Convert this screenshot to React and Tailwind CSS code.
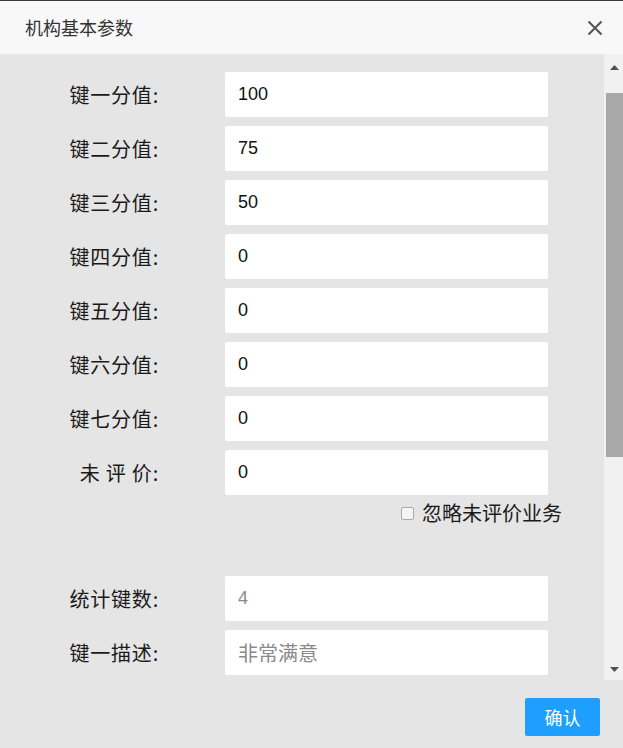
import React from "react";

const cjk = { fontFamily: '"Microsoft YaHei", "Noto Sans CJK SC", sans-serif' };
const latin = { fontFamily: '"Liberation Sans", "Noto Sans CJK SC", sans-serif' };

const scores = [
  ["键一分值:", "100"],
  ["键二分值:", "75"],
  ["键三分值:", "50"],
  ["键四分值:", "0"],
  ["键五分值:", "0"],
  ["键六分值:", "0"],
  ["键七分值:", "0"],
  ["未 评 价:", "0"],
];

function Row({ label, value, placeholder, cjkPlaceholder }) {
  return (
    <div className="flex items-center h-[45px] mb-[9px]">
      <label
        className="w-[159px] text-right text-[20px] tracking-[0.8px] text-[#1a1a1a] whitespace-pre leading-none"
        style={cjk}
      >
        {label}
      </label>
      <div className="ml-[66px] w-[323px] h-[45px] bg-white rounded-[2px] flex items-center pl-[13px]">
        {value !== undefined ? (
          <span className="text-[18px] text-[#111]" style={latin}>
            {value}
          </span>
        ) : (
          <span
            className={cjkPlaceholder ? "text-[20px] text-[#8a8a8a]" : "text-[18px] text-[#8a8a8a]"}
            style={cjkPlaceholder ? cjk : latin}
          >
            {placeholder}
          </span>
        )}
      </div>
    </div>
  );
}

function Scrollbar() {
  return (
    <div className="w-[19px] bg-[#f1f1f1] flex flex-col">
      <div className="h-[27px] flex items-center justify-center pl-[2px]">
        <svg width="9" height="5" viewBox="0 0 9 5">
          <path d="M0 5 L4.5 0 L9 5 Z" fill="#505050" />
        </svg>
      </div>
      <div className="h-[12px]" />
      <div className="ml-[2px] h-[364px] bg-[#a8a8a8]" />
      <div className="flex-1" />
      <div className="h-[22px] flex items-center justify-center pl-[2px]">
        <svg width="9" height="5" viewBox="0 0 9 5">
          <path d="M0 0 L9 0 L4.5 5 Z" fill="#505050" />
        </svg>
      </div>
    </div>
  );
}

export default function App() {
  return (
    <div className="w-[623px] h-[748px] flex flex-col bg-[#e5e5e5] border-t border-[#3a3a3a] overflow-hidden">
      <div className="h-[53px] bg-[#f8f8f8] flex items-center justify-between pl-[25px] pr-[20px] shrink-0">
        <span className="text-[18px] text-[#333]" style={cjk}>
          机构基本参数
        </span>
        <svg width="16" height="16" viewBox="0 0 16 16">
          <path d="M1.5 1.5 L14.5 14.5 M14.5 1.5 L1.5 14.5" stroke="#555" strokeWidth="2" />
        </svg>
      </div>

      <div className="h-[626px] flex shrink-0">
        <div className="flex-1 overflow-hidden pt-[18px]">
          {scores.map(([l, v]) => (
            <Row key={l} label={l} value={v} />
          ))}
          <div className="flex items-center justify-end pr-[42px] -mt-[6px] h-[30px]">
            <span className="w-[13px] h-[13px] border border-[#aaa] rounded-[2px] bg-[#f4f4f4] mr-[8px]" />
            <span className="text-[20px] text-[#1a1a1a]" style={cjk}>
              忽略未评价业务
            </span>
          </div>
          <div className="h-[48px]" />
          <Row label="统计键数:" placeholder="4" />
          <Row label="键一描述:" placeholder="非常满意" cjkPlaceholder />
        </div>
        <Scrollbar />
      </div>

      <div className="flex-1 flex justify-end items-start pt-[18px] pr-[23px]">
        <button
          className="w-[75px] h-[38px] bg-[#1e9fff] text-white text-[18px] rounded-[2px]"
          style={cjk}
        >
          确认
        </button>
      </div>
    </div>
  );
}
